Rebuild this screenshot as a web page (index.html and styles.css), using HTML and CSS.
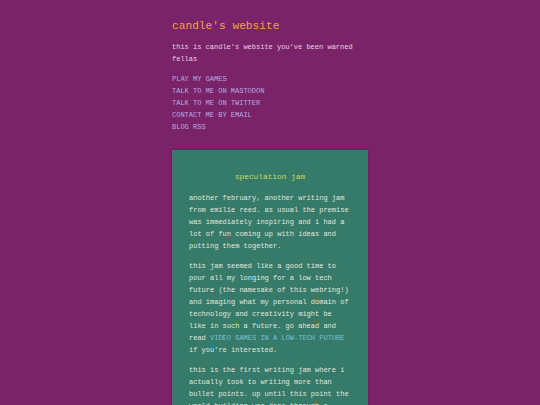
FILE: index.html
```html
<!DOCTYPE html>
<html>
<head>
<meta charset="utf-8">
<link rel="stylesheet" href="styles.css">
</head>
<body>
<div class="page">
  <header class="head">
    <h1 class="title">candle's website</h1>
    <p class="intro">this is candle's website you've been warned fellas</p>
    <nav class="links">
      <a href="#">PLAY MY GAMES</a>
      <a href="#">TALK TO ME ON MASTODON</a>
      <a href="#">TALK TO ME ON TWITTER</a>
      <a href="#">CONTACT ME BY EMAIL</a>
      <a href="#">BLOG RSS</a>
    </nav>
  </header>
  <article class="card">
    <h2 class="card-title">speculation jam</h2>
    <p class="para">another february, another writing jam from emilie reed. as usual the premise was immediately inspiring and i had a lot of fun coming up with ideas and putting them together.</p>
    <p class="para">this jam seemed like a good time to pour all my longing for a low tech future (the namesake of this webring!) and imaging what my personal domain of technology and creativity might be like in such a future. go ahead and read <a class="card-link" href="#">VIDEO GAMES IN A LOW-TECH FUTURE</a> if you're interested.</p>
    <p class="para">this is the first writing jam where i actually took to writing more than bullet points. up until this point the world-building was done through a collection of small notes and lists of ideas.</p>
  </article>
</div>
</body>
</html>
```
FILE: styles.css
```css
html, body {
  margin: 0;
  padding: 0;
  background: #7a2368;
  height: 405px;
  overflow: hidden;
}
body {
  font-family: "Liberation Mono", "DejaVu Sans Mono", monospace;
  font-size: 7px;
  line-height: 12px;
  color: #ead0e4;
}
.page {
  width: 196px;
  margin: 0 auto;
  padding-top: 19px;
}
.title {
  margin: 0;
  font-size: 11.2px;
  line-height: 14px;
  font-weight: normal;
  color: #f2a53c;
}
.intro {
  margin: 8px 0 0;
}
.links {
  margin-top: 8px;
  display: flex;
  flex-direction: column;
}
.links a {
  color: #b8a8e0;
  text-decoration: none;
}
.card {
  margin-top: 17px;
  background: #367b6a;
  padding: 21px 17px 20px;
  box-shadow: 0 0 2px rgba(40, 10, 40, 0.5);
  color: #e2e6de;
}
.card-title {
  margin: 0 0 9px;
  font-size: 7.8px;
  line-height: 12px;
  font-weight: normal;
  text-align: center;
  color: #cad85a;
}
.para {
  margin: 0 0 8px;
}
.card-link {
  color: #74c2d8;
  text-decoration: none;
}
```
